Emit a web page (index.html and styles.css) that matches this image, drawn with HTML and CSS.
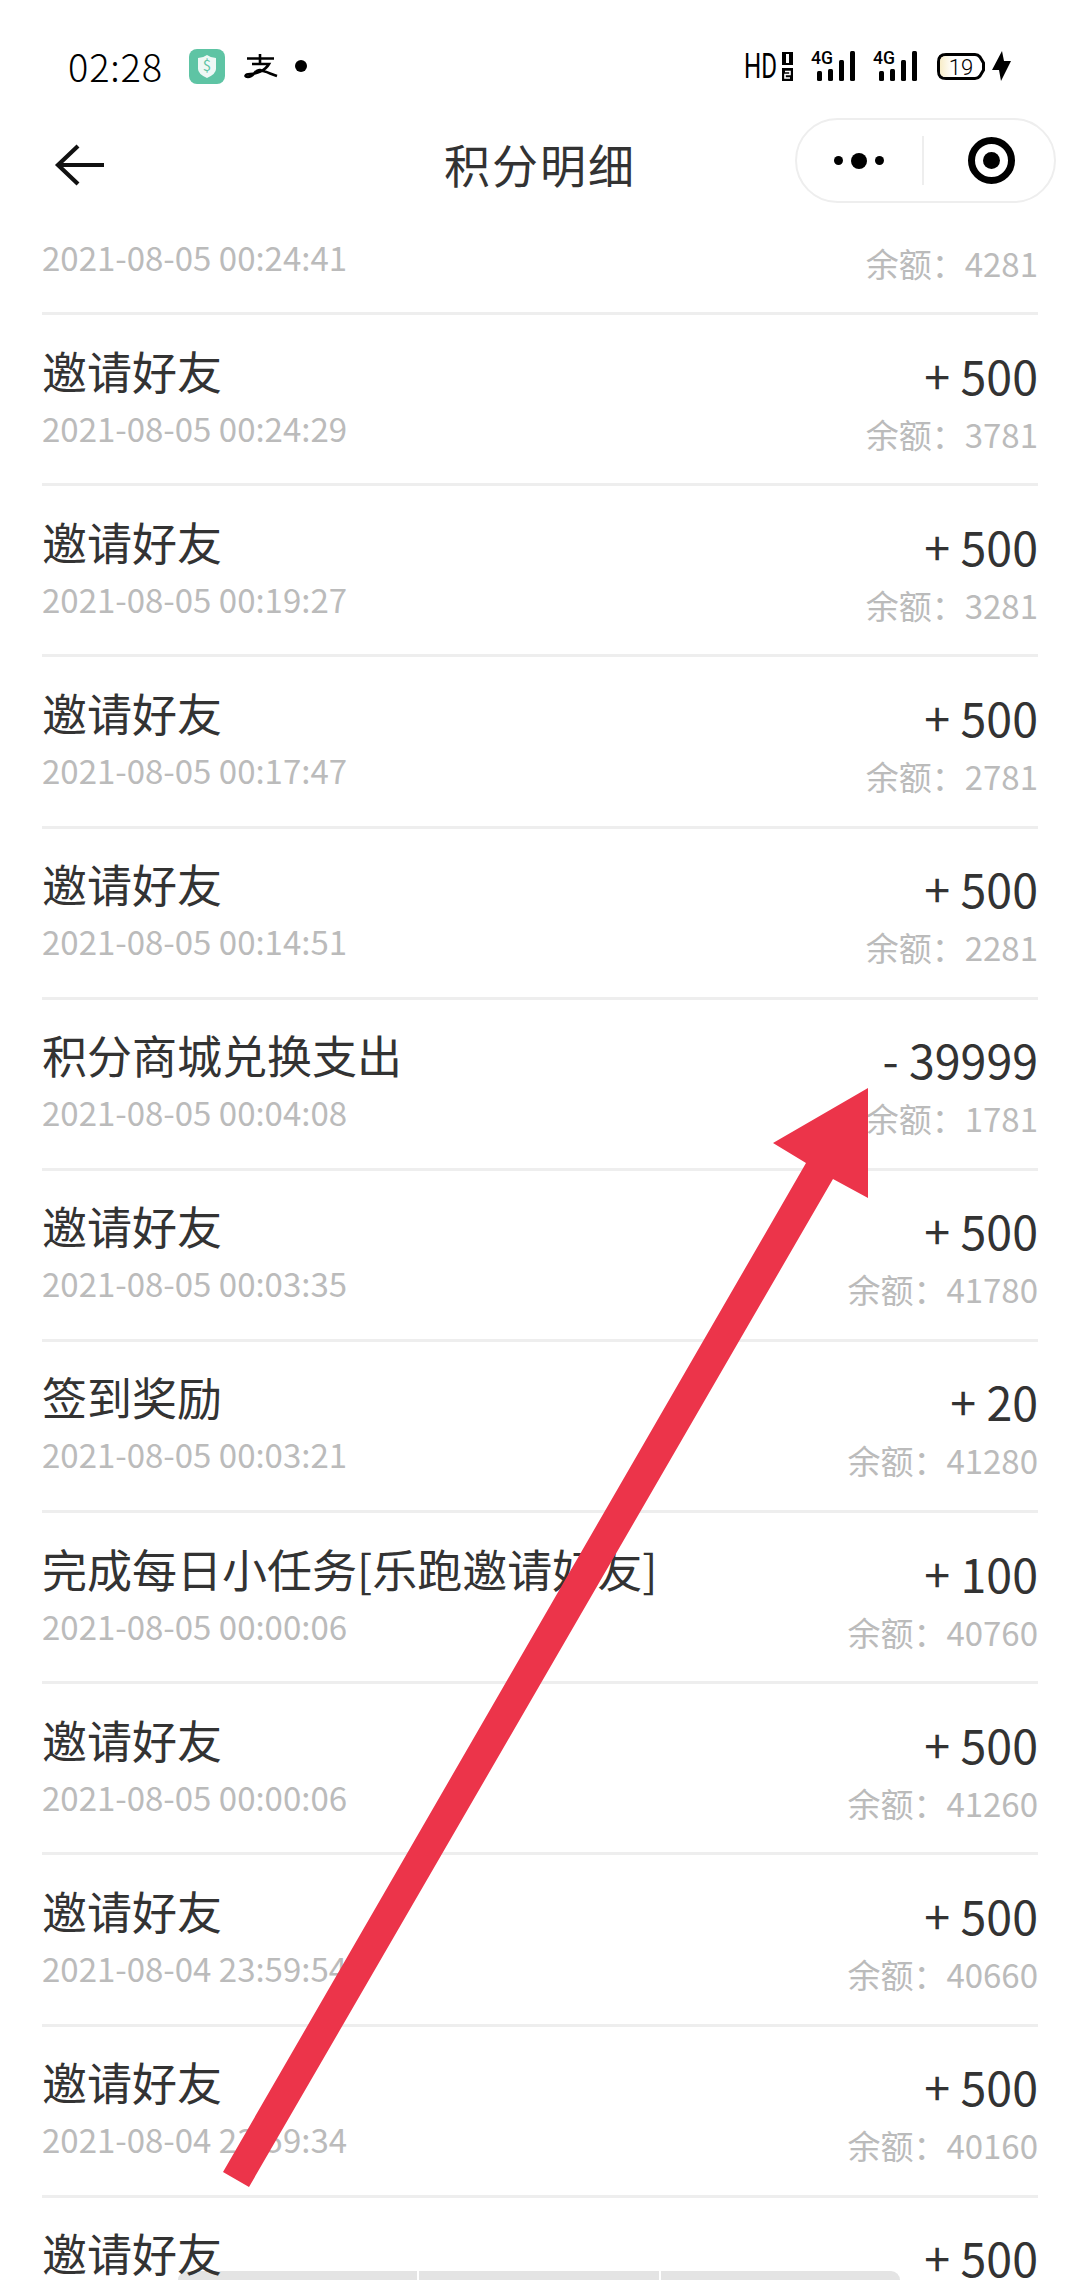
FILE: index.html
```html
<!DOCTYPE html>
<html lang="zh-CN">
<head>
    <meta charset="UTF-8">
    <meta name="viewport" content="width=device-width, initial-scale=1.0">
    <title>积分明细</title>
    <link rel="stylesheet" href="styles.css">
</head>
<body>
    <div class="phone">
        <div class="status-bar">
            <div class="status-left">
                <span class="clock">02:28</span>
                <svg class="app-icon" width="36" height="35" viewBox="0 0 36 35">
                    <rect width="36" height="35" rx="8" fill="#5ec4a4"/>
                    <path d="M9 9 Q14 9 18 6 Q22 9 27 9 V20 Q27 25 18 29 Q9 25 9 20 Z" fill="#eef8f5"/>
                    <text x="18" y="22" class="app-icon-text">$</text>
                </svg>
                <svg class="alipay-icon" width="33" height="24" viewBox="0 0 33 24">
                    <path d="M3 4.5 H30 M16 0 V10 M8 10 H25 C21 17 12 20 6 20 C1 20 0 23 4 23 C10 23 11 15 16 16 C21 17 27 20 33 22" fill="none" stroke="#000" stroke-width="2.6"/>
                </svg>
                <span class="dot"></span>
            </div>
            <div class="status-right">
                <svg class="hd" width="33" height="30" viewBox="0 0 33 30">
                    <text x="0" y="27" class="hd-text" textLength="33" lengthAdjust="spacingAndGlyphs">HD</text>
                </svg>
                <svg class="sim-icon" width="11" height="29" viewBox="0 0 11 29">
                    <rect width="11" height="13" fill="#000"/>
                    <rect x="4" y="2" width="3" height="9" fill="#fff"/>
                    <rect y="16" width="11" height="13" fill="#000"/>
                    <path d="M3 19.5 H8 V22.5 H3 V26 H8" fill="none" stroke="#fff" stroke-width="1.6"/>
                </svg>
                <svg class="signal" width="44" height="30" viewBox="0 0 44 30">
                    <text x="0" y="13" class="signal-text" textLength="22" lengthAdjust="spacingAndGlyphs">4G</text>
                    <rect x="6" y="20" width="5" height="10" rx="1.5"/>
                    <rect x="17" y="18" width="5" height="12" rx="1.5"/>
                    <rect x="28" y="9" width="5" height="21" rx="1.5"/>
                    <rect x="39" y="0" width="5" height="30" rx="1.5"/>
                </svg>
                <svg class="signal" width="44" height="30" viewBox="0 0 44 30">
                    <text x="0" y="13" class="signal-text" textLength="22" lengthAdjust="spacingAndGlyphs">4G</text>
                    <rect x="6" y="20" width="5" height="10" rx="1.5"/>
                    <rect x="17" y="18" width="5" height="12" rx="1.5"/>
                    <rect x="28" y="9" width="5" height="21" rx="1.5"/>
                    <rect x="39" y="0" width="5" height="30" rx="1.5"/>
                </svg>
                <svg class="battery" width="48" height="27" viewBox="0 0 48 27">
                    <defs>
                        <linearGradient id="battery-glow" x1="0" x2="1" y1="0" y2="0">
                            <stop offset="0" stop-color="#f8edc8"/>
                            <stop offset="1" stop-color="#fff"/>
                        </linearGradient>
                    </defs>
                    <path d="M9 1.5 H38 Q41 1.5 43 4 L46.5 10 V17 L43 23 Q41 25.5 38 25.5 H9 Q1.5 25.5 1.5 18 V9 Q1.5 1.5 9 1.5 Z" fill="#fff" stroke="#000" stroke-width="3"/>
                    <path d="M9 3 H16 V24 H9 Q3 24 3 18 V9 Q3 3 9 3 Z" fill="url(#battery-glow)"/>
                    <text x="24" y="21.5" class="battery-num">19</text>
                </svg>
                <svg class="bolt" width="19" height="30" viewBox="0 0 19 30">
                    <path d="M10 0 L0 19 H7 L9 30 L19 10 H12 Z" fill="#000"/>
                </svg>
            </div>
        </div>

        <div class="nav-bar">
            <svg class="back" width="50" height="42" viewBox="0 0 50 42">
                <path d="M23 2 L3 21 L23 40 M3 21 H49" fill="none" stroke="#111" stroke-width="4.2"/>
            </svg>
            <h1 class="nav-title">积分明细</h1>
            <div class="capsule">
                <div class="capsule-more">
                    <span class="more-dot"></span>
                    <span class="more-dot big"></span>
                    <span class="more-dot"></span>
                </div>
                <span class="capsule-line"></span>
                <div class="capsule-close"><span class="close-dot"></span></div>
            </div>
        </div>

        <div class="bottom-strip">
            <span class="strip-cell"></span>
            <span class="strip-cell"></span>
            <span class="strip-cell"></span>
        </div>

        <div class="list-wrap">
            <div class="list" id="list"></div>
        </div>

        <svg class="arrow" width="1080" height="2280" viewBox="0 0 1080 2280">
            <path d="M868 1088 L773 1143 L806 1163 L223 2172 L249 2187 L833 1179 L868 1198 Z" fill="#ec344a"/>
        </svg>
    </div>

    <script>
        // first and last rows are scrolled partly out of view, so their hidden lines stay empty
        const rows = [
            ['', '2021-08-05 00:24:41', '', '4281'],
            ['邀请好友', '2021-08-05 00:24:29', '+ 500', '3781'],
            ['邀请好友', '2021-08-05 00:19:27', '+ 500', '3281'],
            ['邀请好友', '2021-08-05 00:17:47', '+ 500', '2781'],
            ['邀请好友', '2021-08-05 00:14:51', '+ 500', '2281'],
            ['积分商城兑换支出', '2021-08-05 00:04:08', '- 39999', '1781'],
            ['邀请好友', '2021-08-05 00:03:35', '+ 500', '41780'],
            ['签到奖励', '2021-08-05 00:03:21', '+ 20', '41280'],
            ['完成每日小任务[乐跑邀请好友]', '2021-08-05 00:00:06', '+ 100', '40760'],
            ['邀请好友', '2021-08-05 00:00:06', '+ 500', '41260'],
            ['邀请好友', '2021-08-04 23:59:54', '+ 500', '40660'],
            ['邀请好友', '2021-08-04 23:59:34', '+ 500', '40160'],
            ['邀请好友', '', '+ 500', '']
        ];

        const list = document.getElementById('list');
        list.innerHTML = rows.map(r => `
            <div class="row">
                <div class="row-left">
                    <div class="row-title">${r[0]}</div>
                    <div class="row-date">${r[1]}</div>
                </div>
                <div class="row-right">
                    <div class="row-amount">${r[2]}</div>
                    <div class="row-balance">${r[3] ? `余额<span class="colon">：</span>${r[3]}` : ''}</div>
                </div>
            </div>`).join('');
    </script>
</body>
</html>
```

FILE: styles.css
```css
* {
    box-sizing: border-box;
}

html, body {
    margin: 0;
    padding: 0;
    background: #fff;
}

body {
    font-family: "Noto Sans CJK SC", "Noto Sans", sans-serif;
    color: #333;
}

svg {
    overflow: visible;
}

.phone {
    position: relative;
    width: 1080px;
    height: 2280px;
    overflow: hidden;
    background: #fff;
}

.status-bar {
    height: 115px;
    padding: 41px 69px 0 68px;
    display: flex;
    justify-content: space-between;
    align-items: flex-start;
}

.status-left {
    display: flex;
    align-items: center;
    height: 50px;
}

.clock {
    font-size: 38px;
    font-weight: 300;
    letter-spacing: 0.8px;
    line-height: 50px;
    color: #000;
    width: 121px;
}

.app-icon-text {
    font-size: 15px;
    fill: #5ec4a4;
    text-anchor: middle;
}

.alipay-icon {
    margin-left: 19px;
}

.dot {
    width: 12px;
    height: 12px;
    border-radius: 50%;
    background: #000;
    margin-left: 18px;
}

.status-right {
    display: flex;
    align-items: center;
    height: 50px;
}

.hd-text {
    font-family: "Roboto", sans-serif;
    font-size: 35px;
}

.sim-icon {
    margin-left: 5px;
}

.signal {
    margin-left: 18px;
}

.signal-text {
    font-family: "Roboto", sans-serif;
    font-size: 18px;
    font-weight: 500;
}

.battery {
    margin-left: 20px;
}

.battery-num {
    font-family: "Roboto", sans-serif;
    font-size: 22px;
    font-weight: 300;
    text-anchor: middle;
}

.bolt {
    margin-left: 7px;
}

.nav-bar {
    position: relative;
    z-index: 2;
    height: 107px;
    padding: 29px 0 0 55px;
    display: flex;
    align-items: flex-start;
    background: #fff;
}

.nav-title {
    margin: 0;
    position: absolute;
    left: 0;
    right: 0;
    top: 15px;
    text-align: center;
    font-size: 46px;
    font-weight: 400;
    line-height: 66px;
    color: #333;
    letter-spacing: 2px;
}

.capsule {
    position: absolute;
    right: 24px;
    top: 3px;
    width: 261px;
    height: 85px;
    border: 2px solid #eee;
    border-radius: 43px;
    display: flex;
    align-items: center;
}

.capsule-more {
    flex: 1;
    display: flex;
    align-items: center;
    justify-content: center;
    gap: 8px;
}

.more-dot {
    width: 9px;
    height: 9px;
    border-radius: 50%;
    background: #000;
}

.more-dot.big {
    width: 16px;
    height: 16px;
}

.capsule-line {
    width: 2px;
    height: 49px;
    background: #eee;
}

.capsule-close {
    flex: 1;
    display: flex;
    align-items: center;
    justify-content: center;
    padding-left: 6px;
}

.close-dot {
    width: 47px;
    height: 47px;
    border: 7px solid #000;
    border-radius: 50%;
    display: flex;
    align-items: center;
    justify-content: center;
}

.close-dot::after {
    content: "";
    width: 17px;
    height: 17px;
    border-radius: 50%;
    background: #000;
}

.list-wrap {
    position: relative;
    z-index: 1;
    height: 2058px;
    overflow: hidden;
}

.list {
    margin-top: -78px;
    padding: 0 42px;
}

.row {
    height: 171.15px;
    border-bottom: 3px solid #eee;
    display: flex;
    justify-content: space-between;
    padding-top: 22.5px;
}

.row-title {
    font-size: 45px;
    line-height: 66px;
    height: 66px;
    color: #333;
}

.row-date {
    font-size: 33px;
    line-height: 50px;
    height: 50px;
    color: #bbb;
    margin-top: -1px;
}

.row-right {
    text-align: right;
}

.row-amount {
    font-size: 46.5px;
    line-height: 66px;
    height: 66px;
    color: #333;
    margin-top: 4px;
}

.row-balance {
    font-size: 33px;
    line-height: 50px;
    height: 50px;
    color: #bbb;
    margin-top: 1px;
}

.colon {
    font-family: "Noto Sans CJK TC", sans-serif;
}

.bottom-strip {
    position: absolute;
    left: 178px;
    width: 722px;
    bottom: 0;
    height: 9px;
    display: flex;
    gap: 2px;
    border-radius: 12px 12px 0 0;
    overflow: hidden;
}

.strip-cell {
    flex: 1;
    background: #e4e4e4;
}

.arrow {
    position: absolute;
    left: 0;
    top: 0;
    z-index: 3;
    pointer-events: none;
}
```
